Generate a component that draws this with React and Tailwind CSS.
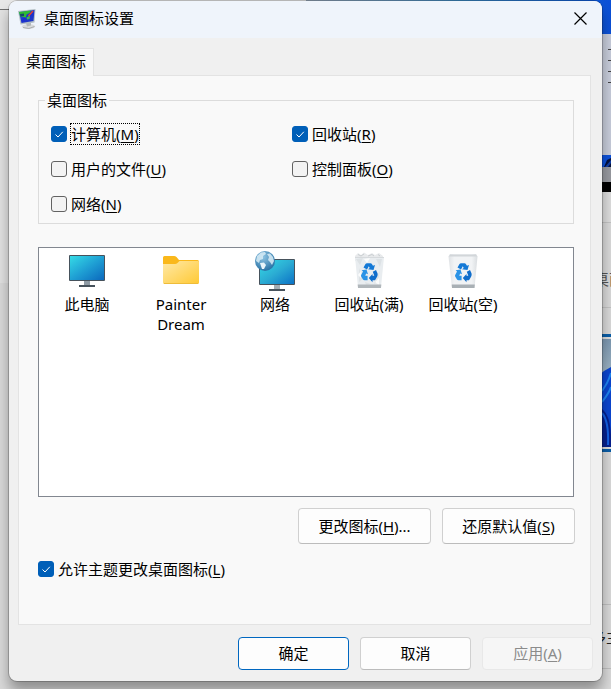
import { useState } from "react";

function TitleIcon() {
    return (
        <svg width="20" height="22" viewBox="0 0 20 22" aria-hidden="true">
            <defs>
                <linearGradient id="titleScreen" x1="0" y1="0" x2="1" y2="1">
                    <stop offset="0" stopColor="#3f7fc8" />
                    <stop offset="0.5" stopColor="#1a2fd0" />
                    <stop offset="1" stopColor="#2440c0" />
                </linearGradient>
            </defs>
            <ellipse cx="11.500" cy="18.500" rx="6.500" ry="2.500" fill="#d9dbdc" />
            <path d="M6 19.500 Q12 22 17.500 18.500" stroke="#a9acae" fill="none" />
            <path d="M9 15 L14 14 L14 17.500 L10 18.500Z" fill="#b4b8ba" />
            <path d="M1 3 L18.500 1 L17.500 14.500 L3.500 16.500Z" fill="#b3bfc5" />
            <path d="M2 4 L17.500 2 L16.500 13 L4.500 15Z" fill="url(#titleScreen)" />
            <path d="M2 4 L14 2.500 L12.500 5 L9.500 6.500 L9 9.500 L6 9 L3 8Z" fill="#2fbb33" />
            <path d="M3 6 L7 5.500 L7 8 L3.500 8.500Z" fill="#16466b" />
            <path d="M9.500 9.500 L13 7.500 L12.500 11 L10 11.500Z" fill="#3bbb4d" />
            <path d="M16 3 L11.500 8" stroke="#e2452c" strokeWidth="1.500" />
        </svg>
    );
}

function ComputerIcon() {
    return (
        <svg width="40" height="40" viewBox="0 0 40 40" aria-hidden="true">
            <defs>
                <linearGradient id="pcScreen" x1="0" y1="0" x2="1" y2="1">
                    <stop offset="0" stopColor="#35dbe6" />
                    <stop offset="0.5" stopColor="#1fa0d4" />
                    <stop offset="1" stopColor="#0b68bd" />
                </linearGradient>
            </defs>
            <path d="M17 30h6v4h-6z" fill="#8f9ba5" />
            <path d="M12 34h16v2H12z" fill="#46525c" />
            <rect x="2" y="4" width="36" height="26" rx="1" fill="#46525c" />
            <rect x="3" y="5" width="34" height="24" fill="url(#pcScreen)" />
        </svg>
    );
}

function FolderIcon() {
    return (
        <svg width="40" height="40" viewBox="0 0 40 40" aria-hidden="true">
            <defs>
                <linearGradient id="folderFront" x1="0" y1="0" x2="1" y2="1">
                    <stop offset="0" stopColor="#ffe9a8" />
                    <stop offset="1" stopColor="#ffc933" />
                </linearGradient>
            </defs>
            <path d="M2 6.500 Q2 5 3.500 5 H13 Q14.500 5 15.500 6 L18 9 H36.500 Q38 9 38 10.500 V20 H2Z" fill="#fab81b" />
            <path d="M2 13 H14 Q15.500 13 16.500 12 L18.500 10 H37 Q38 10 38 11 V31.500 Q38 33 36.500 33 H3.500 Q2 33 2 31.500Z" fill="url(#folderFront)" />
            <path d="M3 32.500H37" stroke="#eebc3a" />
        </svg>
    );
}

function NetworkIcon() {
    return (
        <svg width="40" height="40" viewBox="0 0 40 40" aria-hidden="true">
            <defs>
                <linearGradient id="netScreen" x1="0" y1="0" x2="1" y2="1">
                    <stop offset="0" stopColor="#35dbe6" />
                    <stop offset="0.5" stopColor="#2bacd3" />
                    <stop offset="1" stopColor="#0b72c6" />
                </linearGradient>
                <radialGradient id="globe" cx="0.4" cy="0.3" r="0.7">
                    <stop offset="0" stopColor="#8fc5e4" />
                    <stop offset="1" stopColor="#2a73a6" />
                </radialGradient>
            </defs>
            <path d="M19 34h6v4h-6z" fill="#a3adb5" />
            <path d="M14 38h16v2H14z" fill="#46525c" />
            <rect x="4" y="8" width="36" height="26" rx="1" fill="#46525c" />
            <rect x="5" y="9" width="34" height="24" fill="url(#netScreen)" />
            <circle cx="10" cy="10" r="10" fill="url(#globe)" />
            <path d="M2 5 L6 1.500 L10 1 L11 3 L8 5 L8 8 L5 9 L4 12 L1 10Z" fill="#d8ecf6" opacity="0.85" />
            <path d="M5 12 L9 11.500 L11 14 L9 18 L7 18 L6 15Z" fill="#e8f4fa" />
            <path d="M12 3 L15 2.500 L18 6 L19 10 L17 14 L15 11 L13 9 L14 6Z" fill="#d2e8f3" opacity="0.9" />
        </svg>
    );
}

function RecycleArrows() {
    return (
        <g>
            <path d="M14.500 16.500 L16.500 13 Q17 12.300 18 12.300 H21.500 Q22.500 12.300 23 13.200 L24 14.800 L26 14 L24.500 19 L19 18.200 L20.700 17 L19.800 15.200 L18 18.500Z" fill="#1479d6" />
            <path d="M12.700 19.300 L17.500 18.500 L19 23.300 L17.200 22.500 L16.200 24.800 H18.600 V29.300 H15.500 Q14.500 29.300 14 28.500 L12.200 25.500 Q11.800 24.700 12.200 23.900 L14 20.500Z" fill="#2a93e6" />
            <path d="M23.800 20.800 L27 19 L28.500 22.300 Q29 24 28.200 25.600 L26.500 28.400 Q26 29.300 25 29.300 H23.500 V31.200 L19.800 27 L23.500 23 V24.800 H25.300Z" fill="#0f6dcb" />
        </g>
    );
}

function BinFullIcon() {
    return (
        <svg width="40" height="40" viewBox="0 0 40 40" aria-hidden="true">
            <path d="M6 5 L9 2 L12 4 L15 1.500 L19 4 L23 2 L26 4 L30 2 L34 5 V10 H6Z" fill="#e8eaec" />
            <path d="M9 3.500 L12 5 L15 3 M19 5 L23 3.500 L25 5 M29 3.500 L31 5" stroke="#c9cdd0" fill="none" />
            <path d="M6 6 H35 L32 36 H9Z" fill="#e9edf0" />
            <path d="M7 8 L14 7 L11 14Z M27 8 L33 8 L31 16Z M10 17 L14 28 L10 31Z M31 19 L29 31 L25 33Z M16 31 L22 33 L17 34Z" fill="#dde2e5" />
            <path d="M15 8 L21 7 L18 12Z M9 24 L12 20 L12 27Z M26 31 L30 27 L30 34Z" fill="#fbfcfc" />
            <path d="M8.700 33.500 H32.300 L32 37 H9Z" fill="#b1b7bb" />
            <path d="M6 6.500H35" stroke="#d6dadd" />
            <RecycleArrows />
        </svg>
    );
}

function BinEmptyIcon() {
    return (
        <svg width="40" height="40" viewBox="0 0 40 40" aria-hidden="true">
            <defs>
                <linearGradient id="binBody" x1="0" y1="0" x2="1" y2="0">
                    <stop offset="0" stopColor="#dfe2e5" />
                    <stop offset="0.2" stopColor="#f1f3f5" />
                    <stop offset="0.8" stopColor="#f1f3f5" />
                    <stop offset="1" stopColor="#d9dde0" />
                </linearGradient>
            </defs>
            <path d="M7 3 H33 L34.500 5.500 L31.500 37 H9 L5.500 5.500Z" fill="url(#binBody)" />
            <path d="M7 3.500 H33 L34 5.500 H6Z" fill="#d2d6d9" />
            <path d="M8.700 33.500 H31.800 L31.500 37 H9Z" fill="#a9b0b5" />
            <RecycleArrows />
        </svg>
    );
}

function Label({ text, accessKey }) {
    return (
        <>
            {text}
            {accessKey && (
                <>
                    (<span className="underline underline-offset-2">{accessKey}</span>)
                </>
            )}
        </>
    );
}

function Checkbox({ id, text, accessKey, defaultChecked, focused }) {
    return (
        <div className="flex items-center gap-[3px]">
            <span className="grid size-4 shrink-0">
                <input
                    id={id}
                    type="checkbox"
                    defaultChecked={defaultChecked}
                    className="peer col-start-1 row-start-1 size-4 appearance-none rounded-[3px] border border-[#626262] bg-[#f3f3f3] checked:border-[#005fb8] checked:bg-[#005fb8]"
                />
                <svg
                    viewBox="0 0 16 16"
                    className="pointer-events-none invisible col-start-1 row-start-1 size-4 peer-checked:visible"
                    aria-hidden="true"
                >
                    <path d="M4.500 8.500 L7 11 L11.800 5.800" fill="none" stroke="#fff" />
                </svg>
            </span>
            <label
                htmlFor={id}
                className={focused ? "border border-dotted border-black" : "border border-transparent"}
            >
                <Label text={text} accessKey={accessKey} />
            </label>
        </div>
    );
}

const icons = [
    { name: "此电脑", Icon: ComputerIcon },
    { name: "Painter Dream", Icon: FolderIcon },
    { name: "网络", Icon: NetworkIcon },
    { name: "回收站(满)", Icon: BinFullIcon },
    { name: "回收站(空)", Icon: BinEmptyIcon },
];

// Whatever shows of the desktop and settings window around the dialog.
function Backdrop() {
    return (
        <div className="absolute inset-0 flex justify-between overflow-hidden bg-[#dadada]" aria-hidden="true">
            <div className="flex w-1/2 flex-col">
                <div className="h-[10px] border-b border-[#707070] bg-[#e8e8e8]" />
                <div className="h-[273px] bg-[#e2e2e2]" />
            </div>
            <div className="flex w-1/2 flex-col items-stretch">
                <div className="h-[34px] shrink-0 bg-linear-to-r from-[#8f9fb0] via-[#3b86bd] to-[#0b50d8]" />
                <div className="flex h-[121px] shrink-0 flex-col items-end gap-[10px] bg-[#c8cddb] pt-[15px]">
                    <div className="h-px w-[3px] bg-[#444]" />
                    <div className="h-px w-[3px] bg-[#444]" />
                    <div className="h-px w-[3px] bg-[#444]" />
                    <div className="h-px w-[3px] bg-[#444]" />
                </div>
                <div className="flex h-3 shrink-0 justify-end bg-[#04123f]">
                    <svg viewBox="0 0 9 12" className="h-3 w-[9px]">
                        <path d="M0 0H9V3L5 5 2 12H0Z" fill="#0d52dc" />
                        <path d="M3 12L9 5V8L6 12Z" fill="#1240a8" />
                    </svg>
                </div>
                <div className="h-[15px] shrink-0 bg-[#999ba1]" />
                <div className="h-[10px] shrink-0 bg-black" />
                <div className="h-[31px] shrink-0 border-b border-[#c4c4c4] bg-[#dedede]" />
                <div className="flex h-[85px] shrink-0 items-center justify-end border-b border-[#c4c4c4] pt-[27px]">
                    <div className="w-[17px] whitespace-nowrap text-[#555]">桌面</div>
                </div>
                <div className="h-[26px] shrink-0" />
                <div className="flex h-[118px] shrink-0 flex-col border-y-[3px] border-[#0a5ea8] bg-[#dedede] py-0.5">
                    <svg viewBox="0 0 12 108" preserveAspectRatio="none" className="ml-auto h-full w-3">
                        <defs>
                            <linearGradient id="sky" x1="0" y1="0" x2="0" y2="1">
                                <stop offset="0" stopColor="#7d99b2" />
                                <stop offset="0.3" stopColor="#9db4c4" />
                            </linearGradient>
                        </defs>
                        <path d="M0 0h12v108H0z" fill="url(#sky)" />
                        <path d="M0 36 L5 32 L12 28 V108 H0Z" fill="#0b46d2" />
                        <path d="M3 52 Q9 44 12 34 M3 63 Q10 54 12 48" stroke="#1f86f2" strokeWidth="2" fill="none" />
                        <path d="M3 70 Q11 76 12 96 V108 H3Z" fill="#06208e" />
                        <path d="M3 74 Q10 82 9 106" stroke="#1462e8" strokeWidth="2" fill="none" />
                    </svg>
                </div>
                <div className="h-[153px] shrink-0 border-b border-[#c0c0c0]" />
                <div className="flex h-16 shrink-0 items-center justify-end border-b border-[#c0c0c0]">
                    <div className="w-[20px] whitespace-nowrap text-[#222]">多主</div>
                </div>
            </div>
        </div>
    );
}

const button =
    "flex items-center justify-center rounded-[4px] border border-[#d0d0d0] border-b-[#bcbcbc] bg-[#fdfdfd] pb-px";

export default function App() {
    const [selected, setSelected] = useState(null);

    return (
        <div className="relative min-h-screen overflow-hidden px-[9px] pt-px pb-2 font-['Noto_Sans','Noto_Sans_CJK_SC',sans-serif] text-[15px] leading-5 text-black">
            <Backdrop />
            <div
                role="dialog"
                aria-labelledby="dialog-title"
                className="relative overflow-hidden rounded-lg bg-[#f0f0f0] shadow-[0_0_0_1px_rgba(0,0,0,0.2),0_10px_14px_rgba(0,0,0,0.35)]"
            >
                <header className="flex h-[37px] items-center gap-[7px] bg-[#eff4fb] pr-[14px] pb-[2px] pl-2">
                    <TitleIcon />
                    <h1 id="dialog-title" className="flex-1 pb-px">桌面图标设置</h1>
                    <button type="button" aria-label="关闭" className="p-px">
                        <svg width="13" height="13" viewBox="0 0 13 13" aria-hidden="true">
                            <path d="M0.500 0.500 L12.500 12.500 M12.500 0.500 L0.500 12.500" stroke="#000" strokeWidth="1.200" />
                        </svg>
                    </button>
                </header>

                <main className="px-[9px] pt-[10px] pb-[11px]">
                    <div role="tablist" className="flex">
                        <button
                            type="button"
                            role="tab"
                            id="tab-icons"
                            aria-selected="true"
                            aria-controls="panel-icons"
                            className="relative z-10 -mb-px h-7 border border-b-0 border-[#e3e3e3] bg-[#f9f9f9] px-[7px] pb-1"
                        >
                            桌面图标
                        </button>
                    </div>

                    <div
                        id="panel-icons"
                        role="tabpanel"
                        aria-labelledby="tab-icons"
                        className="mr-[2px] border border-[#e3e3e3] bg-[#f9f9f9] pt-[14px] pr-4 pb-11 pl-[19px]"
                    >
                        <fieldset className="border border-[#dcdcdc] px-3 pb-2">
                            <legend className="-ml-[6px] px-[2px] pb-px">桌面图标</legend>
                            <div className="grid grid-cols-[241px_1fr] gap-y-[13px] pt-3">
                                <Checkbox id="computer" text="计算机" accessKey="M" defaultChecked focused />
                                <Checkbox id="recycle" text="回收站" accessKey="R" defaultChecked />
                                <Checkbox id="files" text="用户的文件" accessKey="U" />
                                <Checkbox id="control" text="控制面板" accessKey="O" />
                                <Checkbox id="network" text="网络" accessKey="N" />
                            </div>
                        </fieldset>

                        <div
                            role="listbox"
                            aria-label="桌面图标"
                            className="mt-[23px] flex h-[250px] flex-wrap content-start border border-[#828790] bg-white px-px pt-[3px]"
                        >
                            {icons.map(({ name, Icon }) => (
                                <button
                                    key={name}
                                    type="button"
                                    role="option"
                                    aria-selected={selected === name}
                                    onClick={() => setSelected(name)}
                                    className="flex w-[94px] flex-col items-center gap-[3px] px-2"
                                >
                                    <Icon />
                                    <span>{name}</span>
                                </button>
                            ))}
                        </div>

                        <div className="mt-[11px] -mr-px flex justify-end gap-[11px]">
                            <button type="button" className={`${button} h-9 w-[133px]`}>
                                <span><Label text="更改图标" accessKey="H" />...</span>
                            </button>
                            <button type="button" className={`${button} h-9 w-[133px]`}>
                                <span><Label text="还原默认值" accessKey="S" /></span>
                            </button>
                        </div>

                        <div className="mt-[14px]">
                            <Checkbox id="themes" text="允许主题更改桌面图标" accessKey="L" defaultChecked />
                        </div>
                    </div>

                    <footer className="mt-3 flex justify-end gap-[11px]">
                        <button type="button" className="flex h-[33px] w-[111px] items-center justify-center rounded-[4px] border border-[#0067c0] bg-[#fdfdfd] pb-px">
                            确定
                        </button>
                        <button type="button" className={`${button} h-[33px] w-[111px]`}>取消</button>
                        <button type="button" disabled className="flex h-[33px] w-[111px] items-center justify-center rounded-[4px] border border-[#e8e8e8] bg-[#f6f6f6] pb-px text-[#8b8b8b]">
                            <span><Label text="应用" accessKey="A" /></span>
                        </button>
                    </footer>
                </main>
            </div>
        </div>
    );
}
